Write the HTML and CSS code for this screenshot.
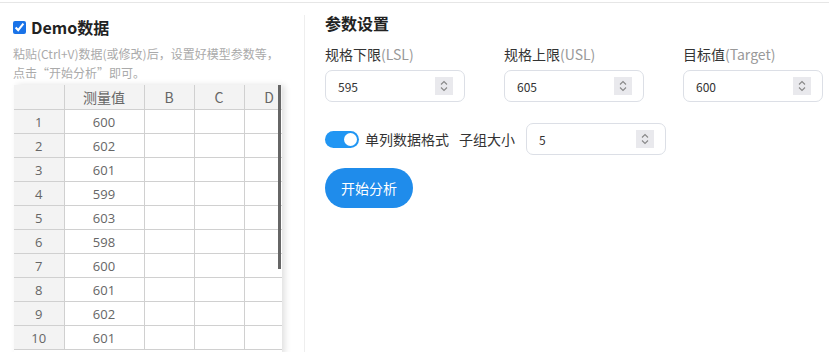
FILE: index.html
```html
<!DOCTYPE html>
<html lang="zh-CN">
<head>
    <meta charset="UTF-8">
    <meta name="viewport" content="width=device-width, initial-scale=1.0">
    <title>过程能力分析</title>
    <link rel="stylesheet" href="styles.css">
</head>
<body>
    <div class="topbar"></div>
    <div class="page">
        <div class="data-panel">
            <label class="demo-title">
                <input type="checkbox" checked>
                <span>Demo数据</span>
            </label>
            <p class="hint">粘贴(Ctrl+V)数据(或修改)后，设置好模型参数等，<br>点击“开始分析”即可。</p>
            <div class="sheet">
                <table>
                    <colgroup>
                        <col class="c-idx"><col class="c-a"><col class="c-n"><col class="c-n"><col class="c-n">
                    </colgroup>
                    <thead>
                        <tr><th></th><th>测量值</th><th>B</th><th>C</th><th>D</th></tr>
                    </thead>
                    <tbody>
                        <tr><th>1</th><td>600</td><td></td><td></td><td></td></tr>
                        <tr><th>2</th><td>602</td><td></td><td></td><td></td></tr>
                        <tr><th>3</th><td>601</td><td></td><td></td><td></td></tr>
                        <tr><th>4</th><td>599</td><td></td><td></td><td></td></tr>
                        <tr><th>5</th><td>603</td><td></td><td></td><td></td></tr>
                        <tr><th>6</th><td>598</td><td></td><td></td><td></td></tr>
                        <tr><th>7</th><td>600</td><td></td><td></td><td></td></tr>
                        <tr><th>8</th><td>601</td><td></td><td></td><td></td></tr>
                        <tr><th>9</th><td>602</td><td></td><td></td><td></td></tr>
                        <tr><th>10</th><td>601</td><td></td><td></td><td></td></tr>
                    </tbody>
                </table>
                <div class="scroll-thumb"></div>
            </div>
        </div>
        <div class="divider"></div>
        <div class="settings">
            <h2>参数设置</h2>
            <div class="fields">
                <div class="field">
                    <label>规格下限<span class="unit">(LSL)</span></label>
                    <div class="num-input"><span>595</span><i class="spin"></i></div>
                </div>
                <div class="field">
                    <label>规格上限<span class="unit">(USL)</span></label>
                    <div class="num-input"><span>605</span><i class="spin"></i></div>
                </div>
                <div class="field">
                    <label>目标值<span class="unit">(Target)</span></label>
                    <div class="num-input"><span>600</span><i class="spin"></i></div>
                </div>
            </div>
            <div class="options">
                <span class="switch on"><span class="knob"></span></span>
                <span class="opt-label">单列数据格式</span>
                <span class="opt-label group">子组大小</span>
                <div class="num-input"><span>5</span><i class="spin"></i></div>
            </div>
            <button class="run-btn">开始分析</button>
        </div>
    </div>
</body>
</html>
```

FILE: styles.css
```css
body {
    margin: 0;
    font-family: 'Noto Sans CJK SC', 'Noto Sans', sans-serif;
    color: #333;
    background: #fff;
    height: 352px;
    overflow: hidden;
}
.topbar {
    height: 2px;
    border-bottom: 1px solid #e6e6e6;
}
.page {
    display: flex;
}
.data-panel {
    width: 291px;
    padding-left: 13px;
    flex-shrink: 0;
}
.demo-title {
    display: flex;
    align-items: center;
    gap: 5px;
    margin-top: 12px;
    font-size: 16px;
    font-weight: bold;
    color: #222;
    line-height: 24px;
}
.demo-title input {
    margin: 0;
    width: 13px;
    height: 13px;
    accent-color: #1a73e8;
}
.hint {
    margin: 5px 0 0;
    font-size: 12px;
    line-height: 19px;
    color: #aaa;
}
.sheet {
    position: relative;
    margin: 3px 0 0 1px;
    width: 268px;
    height: 270px;
    overflow: hidden;
    box-shadow: 3px 0 6px rgba(0,0,0,0.12);
}
table {
    width: 280px;
    border-collapse: collapse;
    table-layout: fixed;
    font-family: 'Open Sans', 'Noto Sans CJK SC', sans-serif;
    font-size: 13px;
    color: #666;
}
.c-idx, .c-n {
    width: 50px;
}
.c-a {
    width: 80px;
}
th, td {
    height: 23px;
    border: 1px solid #d0d0d0;
    text-align: center;
    font-weight: normal;
    padding: 0;
}
thead th {
    height: 24px;
    background: #f3f3f3;
    border-top: none;
    font-family: 'Noto Sans CJK SC', sans-serif;
    font-size: 14px;
}
tbody th {
    background: #f3f3f3;
}
th:first-child {
    border-left: none;
}
.scroll-thumb {
    position: absolute;
    top: 0;
    left: 264px;
    width: 3px;
    height: 184px;
    background: #666;
}
.divider {
    width: 1px;
    margin-top: 12px;
    height: 340px;
    background: #eeeeee;
}
.settings {
    padding-left: 20px;
}
.settings h2 {
    margin: 7px 0 0;
    font-size: 16px;
    line-height: 26px;
    color: #222;
}
.fields {
    display: flex;
    gap: 39px;
    margin-top: 8px;
}
.field label {
    display: block;
    font-size: 14px;
    line-height: 20px;
    color: #333;
}
.unit {
    color: #999;
}
.num-input {
    display: flex;
    align-items: center;
    justify-content: space-between;
    box-sizing: border-box;
    width: 140px;
    height: 32px;
    margin-top: 6px;
    padding: 0 11px 0 12px;
    border: 1px solid #dcdfe6;
    border-radius: 7px;
    font-size: 12px;
    color: #333;
}
.spin {
    width: 18px;
    height: 18px;
    background: #e9e9ed url("data:image/svg+xml,%3Csvg xmlns='http://www.w3.org/2000/svg' width='18' height='18'%3E%3Cpath d='M6 7.5 9 4.5 12 7.5M6 10.5 9 13.5 12 10.5' fill='none' stroke='%23888' stroke-width='1.1'/%3E%3C/svg%3E") no-repeat center;
}
.options {
    display: flex;
    align-items: center;
    margin-top: 21px;
}
.options .num-input {
    margin: 0 0 0 11px;
}
.switch {
    position: relative;
    width: 34px;
    height: 17px;
    border-radius: 9px;
    background: #2196f3;
}
.knob {
    position: absolute;
    top: 2px;
    right: 2px;
    width: 13px;
    height: 13px;
    border-radius: 50%;
    background: #fff;
}
.opt-label {
    margin-left: 6px;
    font-size: 14px;
    color: #333;
}
.opt-label.group {
    margin-left: 10px;
}
.run-btn {
    display: block;
    margin-top: 13px;
    width: 88px;
    height: 40px;
    border: none;
    border-radius: 20px;
    background: #1f8ceb;
    color: #fff;
    font-family: inherit;
    font-size: 14px;
    cursor: pointer;
}
```
